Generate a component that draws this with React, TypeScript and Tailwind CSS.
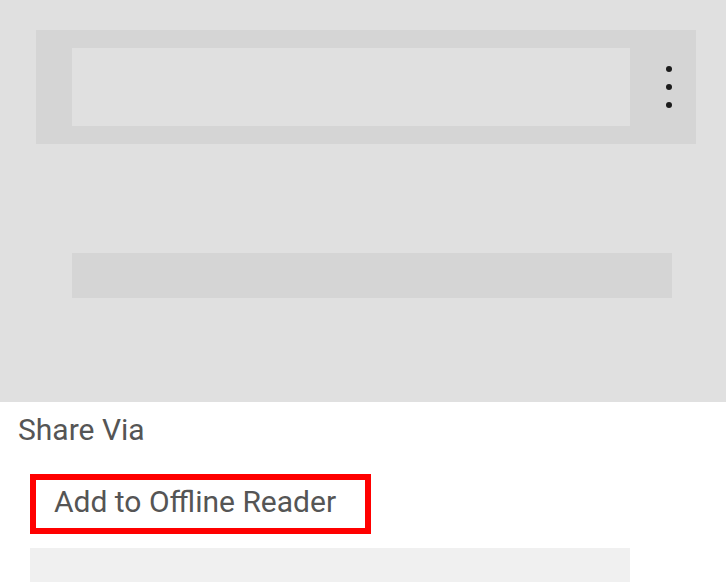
export default function App() {
  return (
    <div className="min-h-screen w-[726px] overflow-hidden bg-white font-['Roboto',sans-serif]">
      {/* placeholder card area */}
      <section className="h-[402px] bg-[#e0e0e0] pt-[30px]">
        <div className="ml-[36px] flex h-[114px] w-[660px] items-center bg-[#d5d5d5] pl-[36px]">
          <div className="h-[78px] w-[558px] bg-[#e0e0e0]" />
          <div className="ml-[36px] flex flex-col gap-[12px]">
            <span className="block h-[6px] w-[6px] rounded-full bg-[#1c1c1c]" />
            <span className="block h-[6px] w-[6px] rounded-full bg-[#1c1c1c]" />
            <span className="block h-[6px] w-[6px] rounded-full bg-[#1c1c1c]" />
          </div>
        </div>
        <div className="ml-[72px] mt-[109px] h-[45px] w-[600px] bg-[#d5d5d5]" />
      </section>

      <div className="pl-[18px] pt-[10px] text-[30px] leading-[35px] text-[#555555]">Share Via</div>

      <div className="ml-[30px] mt-[27px] flex h-[60px] w-[341px] items-start border-[6px] border-[#ff0000] pl-[18px] pt-[4px]">
        <span className="text-[30px] leading-[35px] text-[#555555]">Add to Offline Reader</span>
      </div>

      <div className="ml-[30px] mt-[14px] h-[40px] w-[600px] bg-[#f0f0f0]" />
    </div>
  );
}
